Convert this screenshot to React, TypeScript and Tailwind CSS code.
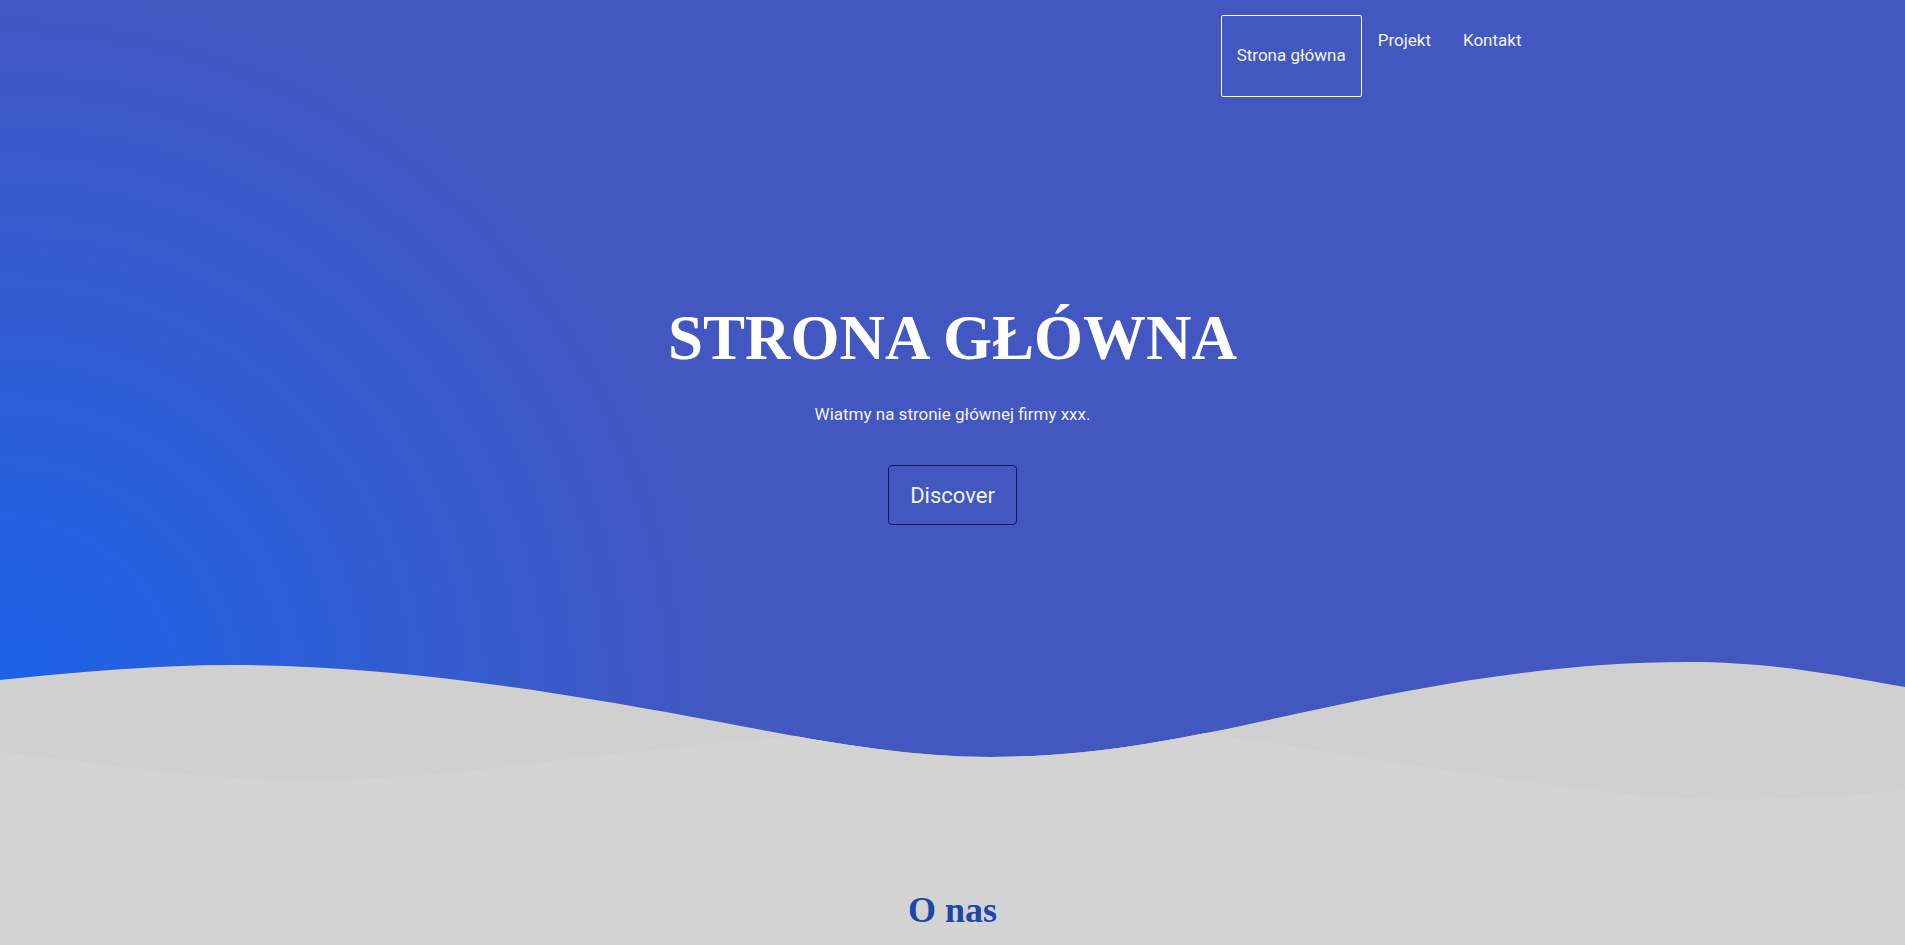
import React from "react";

const MAIN =
  "M0,680 C78,672 155,665 233,665 C393,665 560,692 720,722 C810,739 900,757 990,757 C1100,757 1200,735 1300,713 C1430,684 1558,662 1688,662 C1768,662 1825,673 1905,687 L1905,800 L0,800 Z";
const BACK =
  "M0,752 C100,762 200,780 300,780 C400,780 500,768 600,755 C700,745 950,718 1050,718 C1230,725 1550,799 1722,799 C1800,799 1860,795 1905,790 L1905,800 L0,800 Z";

function Wave() {
  return (
    <svg
      className="absolute bottom-0 left-0 block h-[160px] w-full"
      viewBox="0 640 1905 160"
      preserveAspectRatio="none"
    >
      <defs>
        <clipPath id="mainClip">
          <path d={MAIN} />
        </clipPath>
      </defs>
      <path d={MAIN} fill="#d0d0d0" />
      <path d={BACK} fill="#d3d3d3" clipPath="url(#mainClip)" />
    </svg>
  );
}

export default function App() {
  return (
    <div className="min-h-screen bg-[#d3d3d3] font-['Roboto','Noto_Sans',sans-serif]">
      <header className="relative h-[800px] overflow-hidden bg-[radial-gradient(circle_at_0px_700px,#1b63e8_0px,#4357c0_720px)]">
        <nav className="mx-auto flex w-[1170px] items-start justify-end pt-[15px] text-[17px] leading-[22px] text-[#f2f2fa]">
          <a className="rounded-[2px] border border-white px-[15px] pt-[28px] pb-[30px]">Strona główna</a>
          <a className="px-4 pt-[14px]">Projekt</a>
          <a className="px-4 pt-[14px]">Kontakt</a>
        </nav>
        <div className="flex flex-col items-center">
          <h1 className="mt-[209px] font-['Liberation_Serif',serif] text-[63px] leading-[64px] font-bold text-white">
            STRONA GŁÓWNA
          </h1>
          <p className="mt-[32px] text-[17px] leading-[24px] text-[#f2f2fa]">
            Wiatmy na stronie głównej firmy xxx.
          </p>
          <button className="mt-[39px] flex h-[60px] w-[129px] items-center justify-center rounded-[4px] border border-[#16166b] text-[22px] text-[#f2f2fa]">
            Discover
          </button>
        </div>
        <Wave />
      </header>
      <section className="flex justify-center pt-[92px]">
        <h2 className="font-['Liberation_Serif',serif] text-[36px] leading-[36px] font-bold text-[#1b47a8]">
          O nas
        </h2>
      </section>
    </div>
  );
}
